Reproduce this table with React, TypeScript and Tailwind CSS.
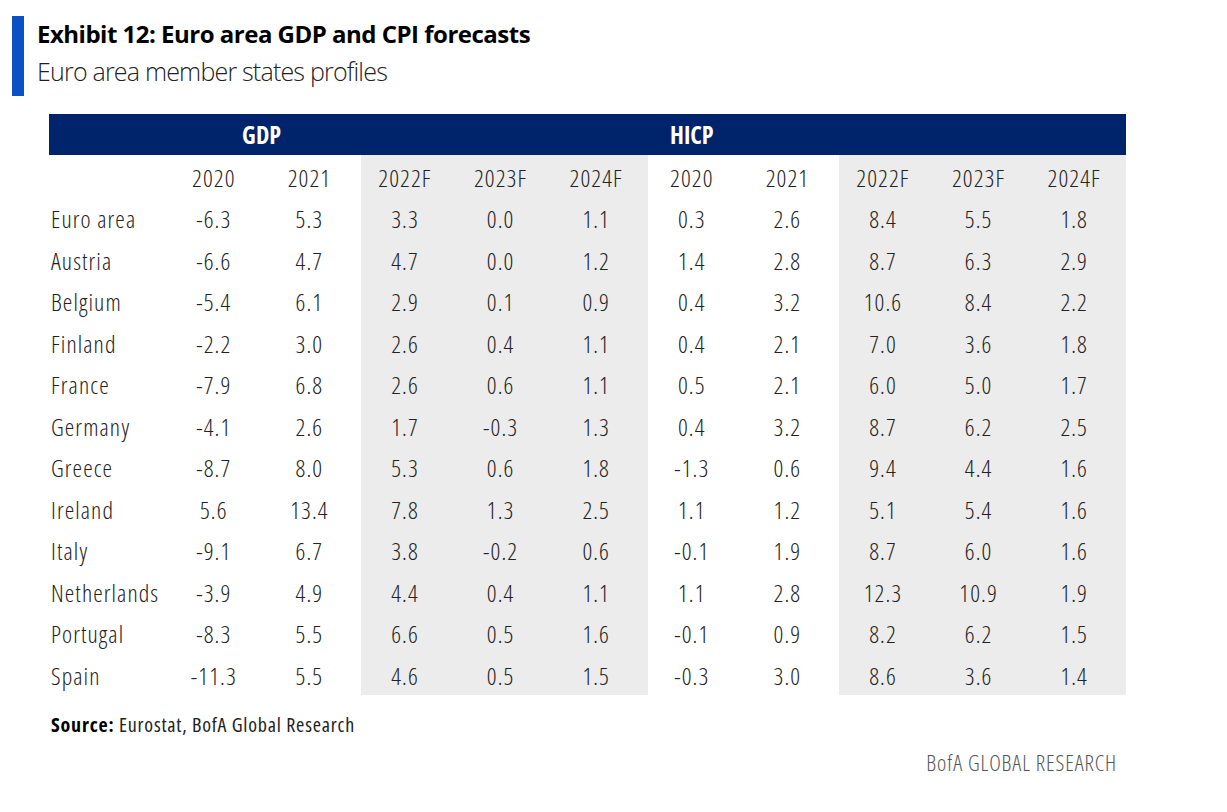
import React from 'react';

const years = ['2020', '2021', '2022F', '2023F', '2024F', '2020', '2021', '2022F', '2023F', '2024F'];

const rows: [string, string[]][] = [
  ['Euro area', ['-6.3', '5.3', '3.3', '0.0', '1.1', '0.3', '2.6', '8.4', '5.5', '1.8']],
  ['Austria', ['-6.6', '4.7', '4.7', '0.0', '1.2', '1.4', '2.8', '8.7', '6.3', '2.9']],
  ['Belgium', ['-5.4', '6.1', '2.9', '0.1', '0.9', '0.4', '3.2', '10.6', '8.4', '2.2']],
  ['Finland', ['-2.2', '3.0', '2.6', '0.4', '1.1', '0.4', '2.1', '7.0', '3.6', '1.8']],
  ['France', ['-7.9', '6.8', '2.6', '0.6', '1.1', '0.5', '2.1', '6.0', '5.0', '1.7']],
  ['Germany', ['-4.1', '2.6', '1.7', '-0.3', '1.3', '0.4', '3.2', '8.7', '6.2', '2.5']],
  ['Greece', ['-8.7', '8.0', '5.3', '0.6', '1.8', '-1.3', '0.6', '9.4', '4.4', '1.6']],
  ['Ireland', ['5.6', '13.4', '7.8', '1.3', '2.5', '1.1', '1.2', '5.1', '5.4', '1.6']],
  ['Italy', ['-9.1', '6.7', '3.8', '-0.2', '0.6', '-0.1', '1.9', '8.7', '6.0', '1.6']],
  ['Netherlands', ['-3.9', '4.9', '4.4', '0.4', '1.1', '1.1', '2.8', '12.3', '10.9', '1.9']],
  ['Portugal', ['-8.3', '5.5', '6.6', '0.5', '1.6', '-0.1', '0.9', '8.2', '6.2', '1.5']],
  ['Spain', ['-11.3', '5.5', '4.6', '0.5', '1.5', '-0.3', '3.0', '8.6', '3.6', '1.4']],
];

// forecast columns get the grey band
const shaded = [false, false, true, true, true, false, false, true, true, true];

const Row = ({ label, cells }: { label: string; cells: string[] }) => (
  <div className="grid grid-cols-[121px_repeat(10,1fr)] h-[41.5px] text-[24px] tracking-[1.1px] font-light text-[#222] [font-stretch:75%]">
    <div className="flex items-center pl-[2px] pt-[4px]">{label}</div>
    {cells.map((c, i) => (
      <div
        key={i}
        className={`flex items-center justify-center pr-[8px] pt-[4px] ${shaded[i] ? 'bg-[#ececec]' : ''}`}
      >
        {c}
      </div>
    ))}
  </div>
);

export default function App() {
  return (
    <div className="w-[1227px] h-[812px] bg-white font-['Open_Sans',sans-serif]">
      <div className="flex pl-[12px] pt-[16px]">
        <div className="w-[12px] h-[80px] bg-[#0a52c4]" />
        <div className="ml-[13px]">
          <h1 className="mt-[3px] text-[24px] leading-[30px] font-bold tracking-[-0.5px] text-black [font-stretch:93%]">
            Exhibit 12: Euro area GDP and CPI forecasts
          </h1>
          <p className="mt-[7px] text-[25px] leading-[30px] font-light tracking-[-0.8px] text-[#222] [font-stretch:93%]">
            Euro area member states profiles
          </p>
        </div>
      </div>

      <div className="ml-[49px] mt-[18px] w-[1077px]">
        <div className="grid grid-cols-[121px_repeat(10,1fr)] h-[41px] bg-[#00246b] text-white text-[24px] font-bold [font-stretch:75%]">
          <div />
          <div className="col-span-2 flex items-center justify-center pr-[8px]">GDP</div>
          <div className="col-span-3" />
          <div className="flex items-center justify-center pr-[8px]">HICP</div>
        </div>
        <Row label="" cells={years} />
        {rows.map(([label, cells]) => (
          <Row key={label} label={label} cells={cells} />
        ))}
      </div>

      <div className="ml-[51px] mt-[18px] text-[20px] leading-[24px] tracking-[0.8px] text-[#222] [font-stretch:75%]">
        <span className="font-bold text-black">Source:</span> Eurostat, BofA Global Research
      </div>

      <div className="w-[1117px] mt-[12px] text-right text-[22px] leading-[26px] tracking-[0.9px] font-light text-[#555] [font-stretch:75%]">
        BofA GLOBAL RESEARCH
      </div>
    </div>
  );
}
